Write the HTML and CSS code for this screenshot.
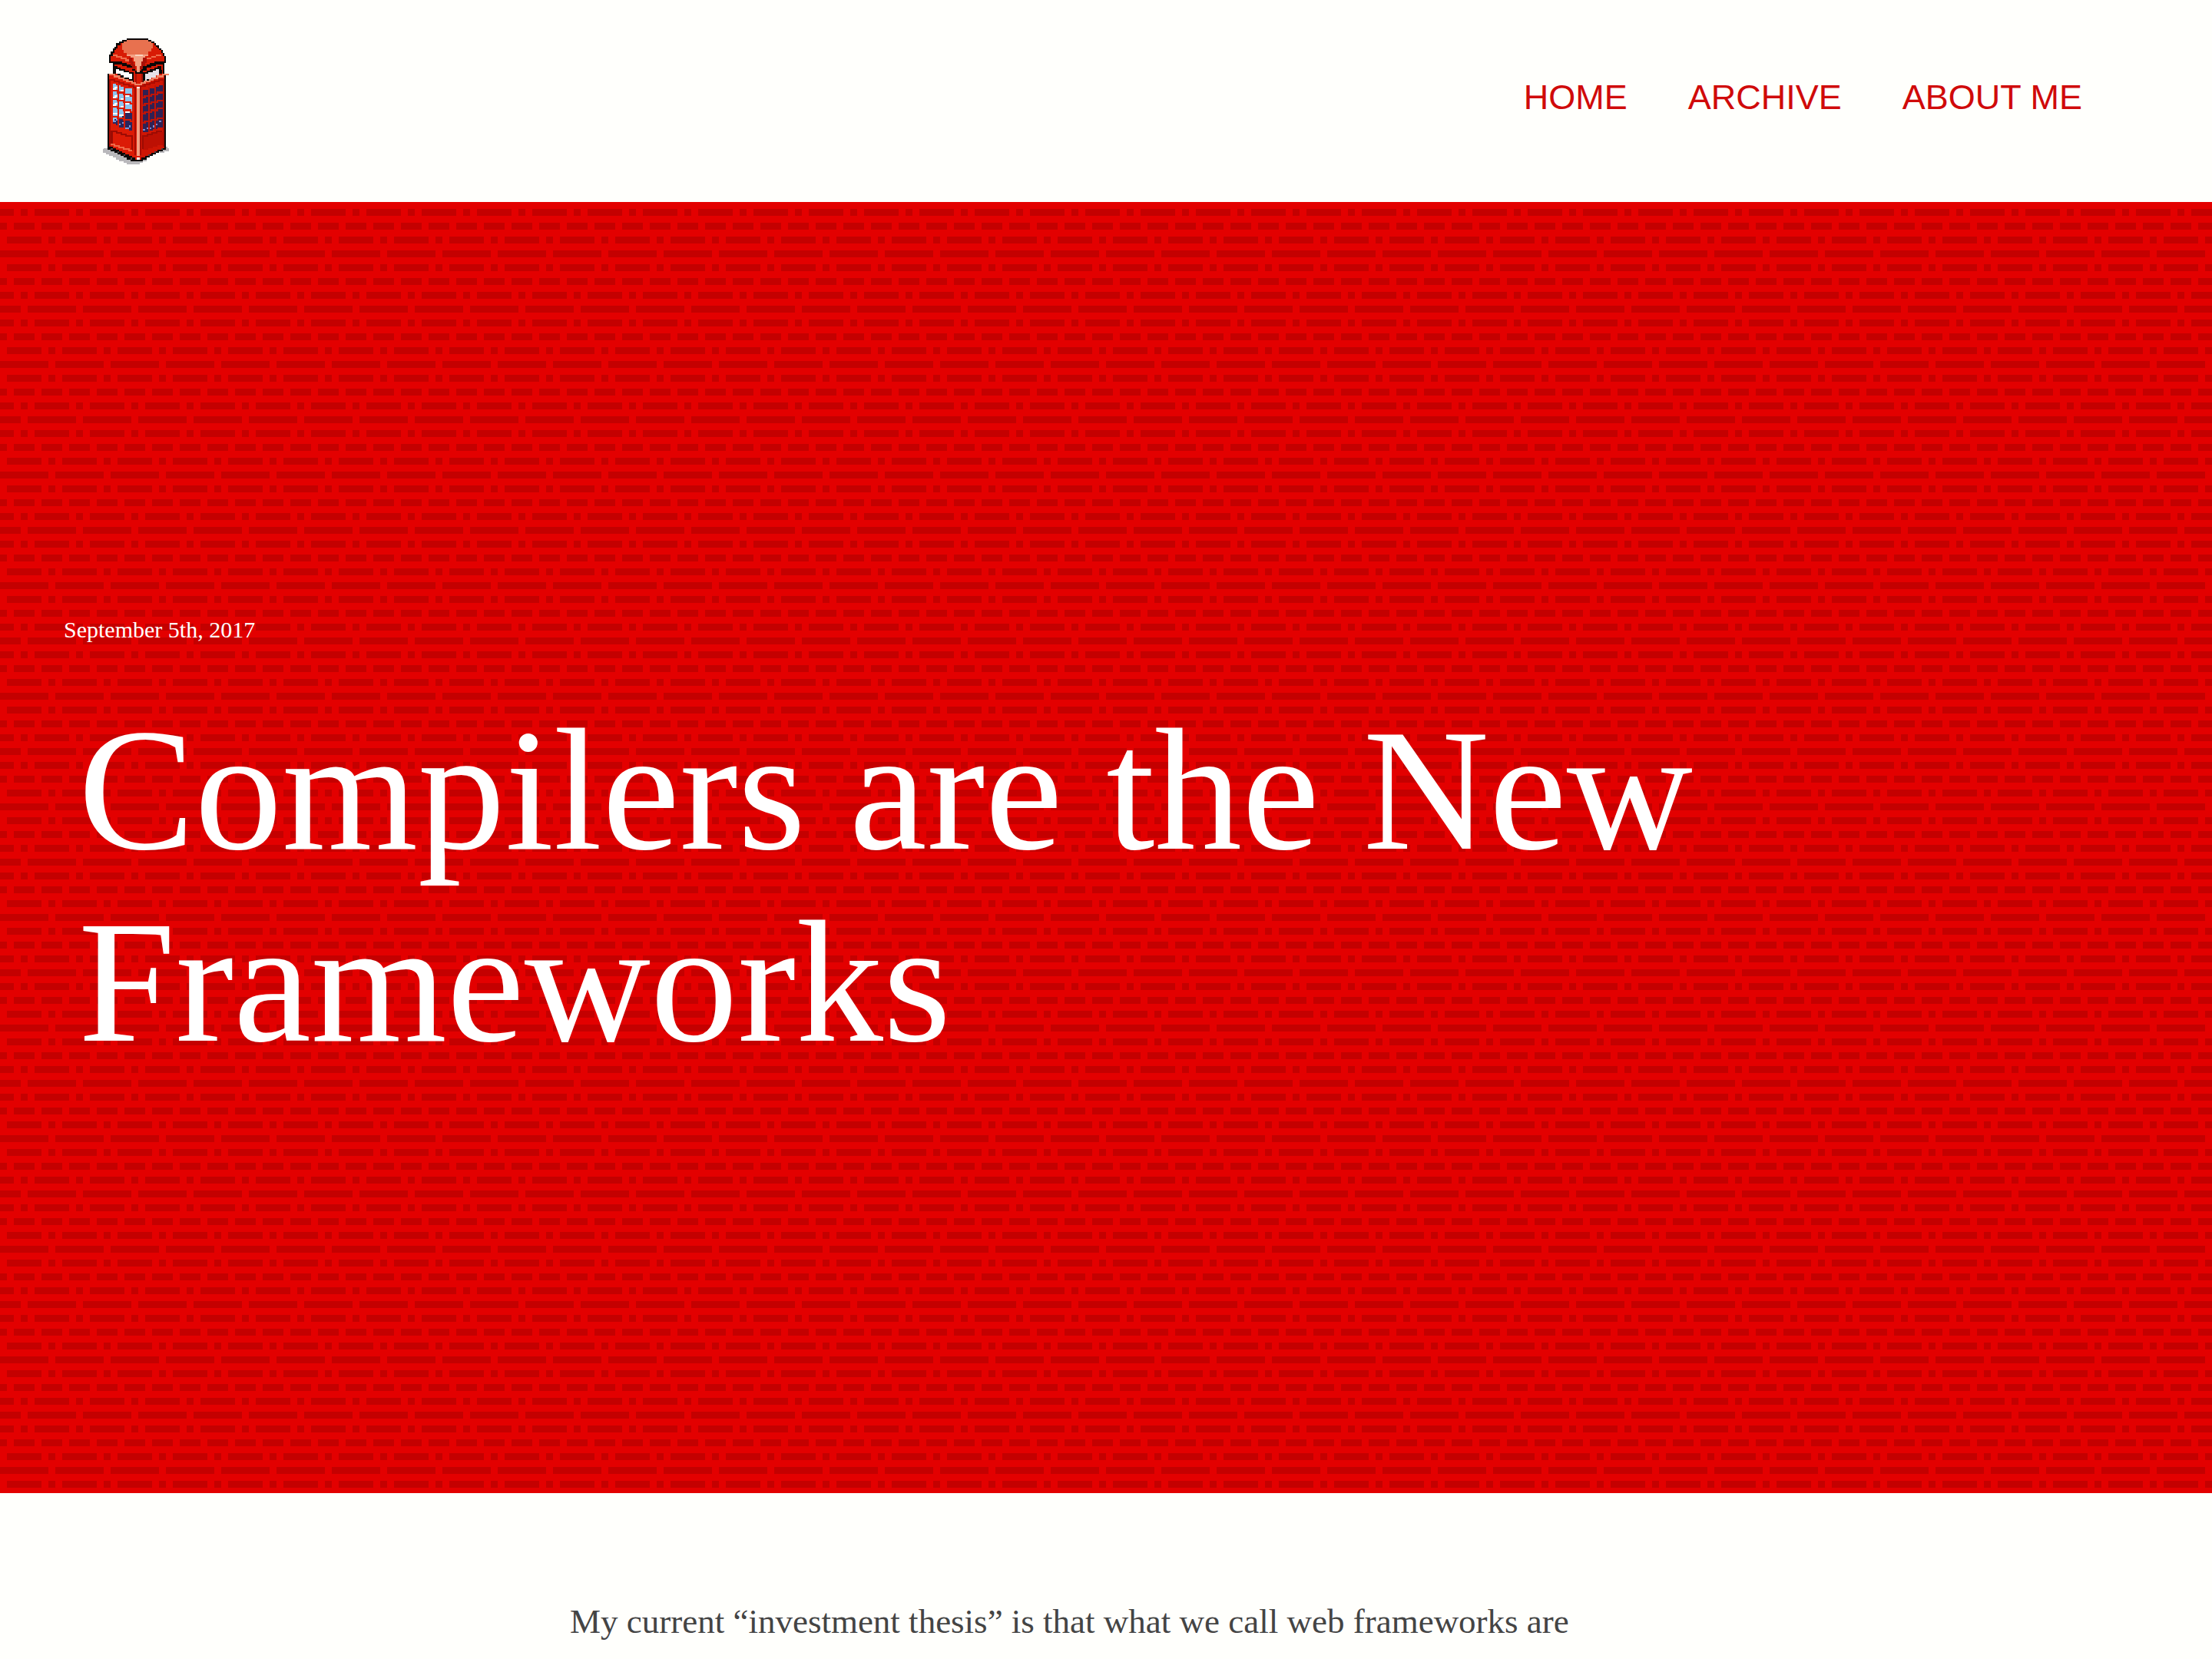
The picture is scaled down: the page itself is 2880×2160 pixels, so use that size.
FILE: index.html
```html
<!DOCTYPE html>
<html lang="en">
<head>
<meta charset="utf-8">
<title>Compilers are the New Frameworks</title>
<link rel="stylesheet" href="styles.css">
</head>
<body>
<header class="site-header">
  <a class="logo" href="#" aria-label="Home">
    <svg class="booth" viewBox="0 0 41 78" shape-rendering="crispEdges" aria-hidden="true">
      <!-- ground shadow -->
      <path fill="#b9b8bb" d="M1 68h3v1h14v6h9v1h-2v1h-2v1h-8v-1h-2v-1h-3v-1h-2v-1h-2v-1h-2v-1h-2v-1h-2v-1h-2v-1h1zM37 67h3v1h1v2h-3v1h-3z"/>
      <!-- outline -->
      <path fill="#0c0808" d="M15 0h13v1h2v1h2v1h1v1h2v2h1v1h1v2h1v2h1v4h-1v7h1v47h-2v1h-2v1h-2v1h-2v1h-2v1h-2v1h-2v1H17v-1h-2v-1h-2v-1h-2v-1H9v-1H7v-1H5v-1H3V22h3v-7H4v-5h1V8h1V6h1V5h1V3h2V2h2V1h3z"/>
      <!-- dome -->
      <path fill="#d81b05" d="M15 1h13v1h2v1h2v1h1v1h1v1h1v1h1v2h1v2h1v3h-6v1h-3v1h-2v1h-2v2h-1v1h-4v-1h-1v-2h-2v-1h-2v-1h-3v-1H5v-3h1V9h1V7h1V6h1V4h2V3h2V2h2z"/>
      <path fill="#e8714f" d="M15 1h13v1h2v1h1v3h-1v2h-2v2H15V9h-2V7h-1V3h1V2h2z"/>
      <path fill="#ef6f4e" d="M6 10h3v1h3v1h3v1h2v1h-3v-1h-3v-1H8v-1H6zM36 10h-3v1h-3v1h-3v1h3v-1h3v-1h3z"/>
      <path fill="#f3a083" d="M15 10h13v1h-2v1h-1v2h-1v3h-1v4h-2v-4h-1v-3h-1v-2h-2v-1h-2z"/>
      <path fill="#fbd2bd" d="M20 10h5v1h-5z"/>
      <path fill="#aa1007" d="M16 12h2v2h1v2h1v3h-2v-2h-1v-2h-1zM27 12h-2v2h-1v3h-1v2h2v-2h1v-2h1z"/>
      <!-- neck and signs -->
      <path fill="#d81b05" d="M7 16h5v1h3v1h3v2h2v2h5v-2h2v-2h3v-1h3v-1h4v7h-3v1h-3v1h-3v1h-3v1h-2v1h-4v-1h-2v-1h-3v-1h-3v-1H9v-1H7z"/>
      <path fill="#0c0808" d="M7 17h2v1h2v1h3v1h2v1h3v6h-1v-1h-2v-1h-3v-1h-2v-1H9v-1H7zM36 17h-2v1h-2v1h-3v1h-2v1h-2v6h1v-1h2v-1h2v-1h3v-1h2v-1h2z"/>
      <path fill="#fff" d="M8 19h2v1h3v1h3v1h2v3h-2v-1h-3v-1h-2v-1H8z"/>
      <path fill="#e6e1e7" d="M35 19h-2v1h-2v1h-3v1h-2v4h1v-1h3v-1h3v-1h2z"/>
      <path fill="#aa1007" d="M20 22h1v6h-1zM24 22h1v5h-1z"/>
      <!-- faces -->
      <path fill="#dc1b06" d="M4 23h3v1h3v1h3v1h3v1h3v1h4v47h-3v-1h-2v-1h-2v-1h-2v-1h-2v-1h-2v-1H8v-1H6v-1H4z"/>
      <path fill="#cf1604" d="M38 23h-3v1h-3v1h-3v1h-3v1h-3v48h1v-1h2v-1h2v-1h2v-1h2v-1h2v-1h2v-1h2z"/>
      <path stroke="#f08464" fill="none" d="M4 22.500h3v1h3v1h3v1h2v1h3v1h2v1h4v-1h2v-1h3v-1h2v-1h3v-1h3v-1h4"/>
      <path stroke="#a90c03" fill="none" d="M4 25.500h3v1h3v1h3v1h3v1h3v1h1v42M38 25.500h-3v1h-3v1h-3v1h-3v1h-2.500v43"/>
      <path fill="#f2a082" d="M21 30h2v43h-2z"/>
      <path fill="#fff" d="M21 30h2v1h-2zM21 74h2v1h-2z"/>
      <path fill="#a90c03" d="M4 25h1v42H4zM37 25h1v42h-1z"/>
      <!-- left windows -->
      <path fill="#8dc5ee" d="M6 28h2v1h3v1h3v1h4v26h-2v-1h-3v-1h-3v-1H8v-1H6z"/>
      <path fill="#fff" d="M6 31h2v1H6zM7 30h2v1H7zM10 33h2v1h-2zM11 32h2v1h-2zM14 35h2v1h-2zM15 34h2v1h-2zM6 36h2v1H6zM7 35h2v1H7zM10 38h2v1h-2zM11 37h2v1h-2zM14 40h2v1h-2zM15 39h2v1h-2zM6 41h2v1H6zM7 40h2v1H7zM10 43h2v1h-2zM11 42h2v1h-2zM14 44h3v2h-3zM6 46h3v1H6zM10 47h3v1h-3z"/>
      <path fill="#29265f" d="M6 51h1v-1h3v-1h2v-1h2v-2h4v11h-2v-1h-3v-1h-3v-1H8v-1H6z"/>
      <path fill="#7e9ad9" d="M6 51h2v1H6zM8 50h1v1H8zM10 53h1v1h-1zM12 52h1v1h-1zM14 55h2v1h-2zM16 54h1v1h-1z"/>
      <path stroke="#d81b05" fill="none" d="M9.500 28v27M13.500 29v28M6 32.500h3v1h4v1h4v1h1M6 37.500h3v1h4v1h4v1h1M6 42.500h3v1h4v1h4v1h1M6 48.500h3v1h4v1h4v1h1"/>
      <!-- right windows -->
      <path fill="#302052" d="M37 29h-2v1h-3v1h-3v1h-4v26h3v-1h3v-1h3v-1h3z"/>
      <path fill="#7e8ad0" d="M25 56h1v1h-1zM27 55h1v1h-1zM29 55h1v1h-1zM31 54h1v1h-1zM33 53h1v1h-1zM35 51h1v1h-1z"/>
      <path stroke="#bd1408" fill="none" d="M28.500 30v28M32.500 29v28M37 33.500h-3v1h-4v1h-4v1h-1M37 38.500h-3v1h-4v1h-4v1h-1M37 43.500h-3v1h-4v1h-4v1h-1M37 49.500h-3v1h-4v1h-4v1h-1"/>
      <!-- lower panels -->
      <path fill="#bd1003" d="M37 58h-3v1h-3v1h-3v1h-3v8h3v-1h3v-1h3v-1h3z"/>
      <path stroke="#9c0b03" fill="none" d="M5.500 65v-7.500h3v1h3v1h3v1h3.500v9M36.500 57.500h-3v1h-3v1h-3v1h-2.500v8"/>
      <path stroke="#ef6a48" fill="none" d="M5 65.500h2v1h3v1h3v1h3v1h2"/>
      <!-- plinth -->
      <path stroke="#4b4548" fill="none" d="M5 68.500h1M9 70.500h1M13 72.500h1M17 74.500h1M36 68.500h1M32 70.500h1M28 72.500h1"/>
    </svg>
  </a>
  <nav class="nav"><a href="#">HOME</a><a href="#">ARCHIVE</a><a href="#">ABOUT ME</a></nav>
</header>
<section class="hero">
  <time class="date">September 5th, 2017</time>
  <h1 class="title">Compilers are the New Frameworks</h1>
</section>
<main class="article">
  <p>My current “investment thesis” is that what we call web frameworks are</p>
</main>
</body>
</html>
```
FILE: styles.css
```css
body {
  margin: 0;
  height: 2160px;
  overflow: hidden;
  background: #fffffc;
  color: #444;
  font-family: "Liberation Serif", serif;
}
.site-header {
  box-sizing: border-box;
  height: 263px;
  padding: 0 169px 0 134px;
  display: flex;
  justify-content: space-between;
  align-items: center;
}
.booth { display: block; width: 86px; height: 164px; }
.nav {
  display: flex;
  gap: 79px;
  padding-bottom: 10px;
  font: 45px/52px "Liberation Sans", sans-serif;
}
.nav a { color: #d00a0a; text-decoration: none; }
.hero {
  box-sizing: border-box;
  height: 1681px;
  padding: 539px 83px 0;
  color: #fff;
  background-color: #e30000;
  background-image: url("data:image/svg+xml,%3Csvg xmlns='http://www.w3.org/2000/svg' width='72' height='144' viewBox='0 0 8 16' shape-rendering='crispEdges'%3E%3Cpath fill='%23c40000' d='M0 1h2v1H0zM3 1h1v1H3zM5 1h3v1H5zM0 3h1v1H0zM2 3h3v1H2zM6 3h2v1H6zM1 5h5v1H1zM7 5h1v1H7zM0 7h7v1H0zM1 9h5v1H1zM7 9h1v1H7zM0 11h1v1H0zM2 11h3v1H2zM6 11h2v1H6zM0 13h2v1H0zM3 13h1v1H3zM5 13h3v1H5zM0 15h3v1H0zM4 15h4v1H4z'/%3E%3C/svg%3E");
}
.date { display: block; font-size: 30px; line-height: 36px; }
.title {
  width: 2300px;
  margin: 65px 0 0 19px;
  font-size: 227.3px;
  line-height: 250px;
  font-weight: 400;
}
.article { width: 1396px; margin: 0 auto; padding-top: 140px; }
.article p { margin: 0; font-size: 45px; line-height: 54px; white-space: nowrap; }
```
